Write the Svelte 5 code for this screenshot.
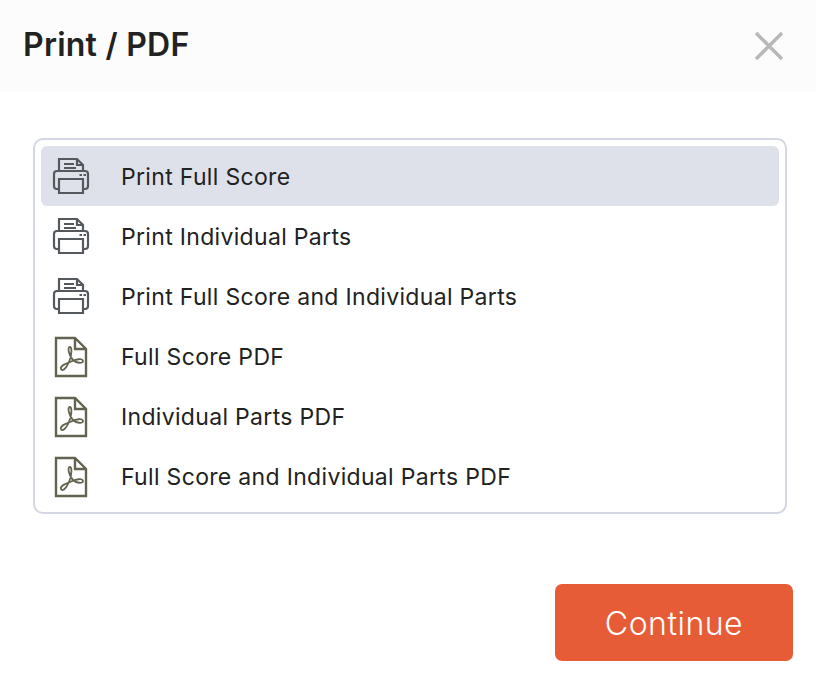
<script lang="ts">
	interface Option {
		label: string;
		icon: 'print' | 'pdf';
	}

	const options: Option[] = [
		{ label: 'Print Full Score', icon: 'print' },
		{ label: 'Print Individual Parts', icon: 'print' },
		{ label: 'Print Full Score and Individual Parts', icon: 'print' },
		{ label: 'Full Score PDF', icon: 'pdf' },
		{ label: 'Individual Parts PDF', icon: 'pdf' },
		{ label: 'Full Score and Individual Parts PDF', icon: 'pdf' }
	];

	let selected = $state(0);
</script>

<div class="dialog">
	<header class="dialog-header">
		<h1>Print / PDF</h1>
		<button class="close" aria-label="Close">
			<svg width="30" height="30" viewBox="0 0 30 30">
				<path d="M2 2 L28 28 M28 2 L2 28" fill="none" stroke="#b8b8b8" stroke-width="3.4" />
			</svg>
		</button>
	</header>

	<div class="options">
		{#each options as option, i}
			<button class="option" class:active={i === selected} onclick={() => (selected = i)}>
				<span class="icon">
					{#if option.icon === 'print'}
						<svg class="printer" width="38" height="38" viewBox="0 0 38 38" fill="none" stroke="#55595e" stroke-width="2.2">
							<path d="M7 14 V2 H25 L31 8 V14" />
							<path d="M25 2 V8 H31" />
							<path d="M12 7 H22 M12 11 H24" />
							<path d="M7 32 H5 Q2 32 2 29 V17 Q2 14 5 14 H33 Q36 14 36 17 V29 Q36 32 33 32 H31" />
							<path d="M7 22 H31 V36 H7 Z" />
							<path d="M27.5 18 H30 M31.5 18 H34" />
						</svg>
					{:else}
						<svg class="pdf" width="34" height="42" viewBox="0 0 34 42" fill="none" stroke="#63634f" stroke-width="2.4">
							<path d="M2 2 H21 L32 13 V40 H2 Z" />
							<path d="M21 2 V13 H32" />
							<path
								stroke-width="1.8"
								d="M7 33 C8 36 12 33 15 26 C18 19 18 11 16 11 C13 11 15 20 19 24 C22 27 29 28 29 25 C29 22 22 23 16 26 C11 28 6 30 7 33 Z"
							/>
						</svg>
					{/if}
				</span>
				<span class="label">{option.label}</span>
			</button>
		{/each}
	</div>

	<footer class="dialog-footer">
		<button class="continue">Continue</button>
	</footer>
</div>

<style>
	:global(body) {
		background: #fff;
	}

	.dialog {
		font-family: Inter, 'Liberation Sans', sans-serif;
		color: #222;
	}

	.dialog-header {
		height: 92px;
		background: #fcfcfc;
		display: flex;
		justify-content: space-between;
		align-items: center;
		padding: 0 32px 0 23px;
		box-sizing: border-box;
	}

	h1 {
		margin: 0 0 4px;
		font-size: 32px;
		font-weight: 600;
		letter-spacing: 0.25px;
		color: #222;
	}

	.close {
		background: none;
		border: none;
		padding: 0;
		display: flex;
		cursor: pointer;
	}

	.options {
		margin: 46px 29px 0 33px;
		height: 376px;
		box-sizing: border-box;
		border: 2px solid #d3d6e3;
		border-radius: 10px;
		padding: 6px;
		background: #fff;
	}

	.option {
		width: 100%;
		height: 60px;
		display: flex;
		align-items: center;
		background: none;
		border: none;
		border-radius: 6px;
		padding: 0 0 0 10px;
		cursor: pointer;
		font-family: inherit;
		color: inherit;
		text-align: left;
	}

	.option.active {
		background: #dfe1ea;
	}

	.icon {
		width: 70px;
		flex-shrink: 0;
		display: flex;
	}

	.printer {
		margin-left: 1px;
	}

	.pdf {
		margin-left: 3px;
		margin-top: 1px;
	}

	.label {
		padding-top: 2px;
		font-size: 23px;
		letter-spacing: 0.32px;
	}

	.dialog-footer {
		display: flex;
		justify-content: flex-end;
		padding: 70px 23px 0 0;
	}

	.continue {
		width: 238px;
		height: 77px;
		padding: 2px 0 0;
		background: #e65c36;
		color: #fff;
		border: none;
		border-radius: 7px;
		font-family: inherit;
		font-size: 32px;
		font-weight: 300;
		letter-spacing: 0.5px;
		cursor: pointer;
	}
</style>
